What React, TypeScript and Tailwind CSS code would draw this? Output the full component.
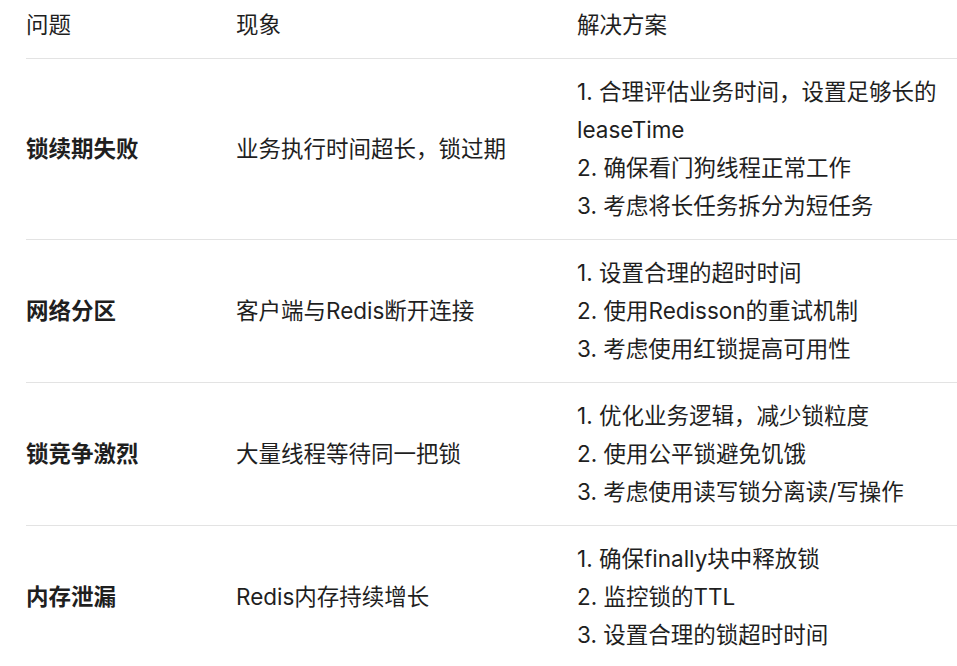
import React from "react";

const rows = [
  {
    problem: "锁续期失败",
    symptom: "业务执行时间超长，锁过期",
    solutions: ["1. 合理评估业务时间，设置足够长的leaseTime", "2. 确保看门狗线程正常工作", "3. 考虑将长任务拆分为短任务"],
  },
  {
    problem: "网络分区",
    symptom: "客户端与Redis断开连接",
    solutions: ["1. 设置合理的超时时间", "2. 使用Redisson的重试机制", "3. 考虑使用红锁提高可用性"],
  },
  {
    problem: "锁竞争激烈",
    symptom: "大量线程等待同一把锁",
    solutions: ["1. 优化业务逻辑，减少锁粒度", "2. 使用公平锁避免饥饿", "3. 考虑使用读写锁分离读/写操作"],
  },
  {
    problem: "内存泄漏",
    symptom: "Redis内存持续增长",
    solutions: ["1. 确保finally块中释放锁", "2. 监控锁的TTL", "3. 设置合理的锁超时时间"],
  },
];

export default function App() {
  return (
    <div
      className="w-[957px] h-[666px] overflow-hidden bg-white text-[#1f1f1f] text-[22.5px] leading-[38px]"
      style={{ fontFamily: 'Inter, "Noto Sans CJK SC", sans-serif' }}
    >
      <div className="ml-[26px] w-[931px]">
        <div className="grid grid-cols-[210px_341px_380px] border-b border-[#e3e3e3] pt-[6px] pb-[14px]">
          <div>问题</div>
          <div>现象</div>
          <div>解决方案</div>
        </div>
        {rows.map((r) => (
          <div
            key={r.problem}
            className="grid grid-cols-[210px_341px_380px] items-center border-b border-[#e3e3e3] py-[14px]"
          >
            <div className="font-bold">{r.problem}</div>
            <div>{r.symptom}</div>
            <div className="pr-[6px]">
              {r.solutions.map((s) => (
                <div key={s}>{s}</div>
              ))}
            </div>
          </div>
        ))}
      </div>
    </div>
  );
}
